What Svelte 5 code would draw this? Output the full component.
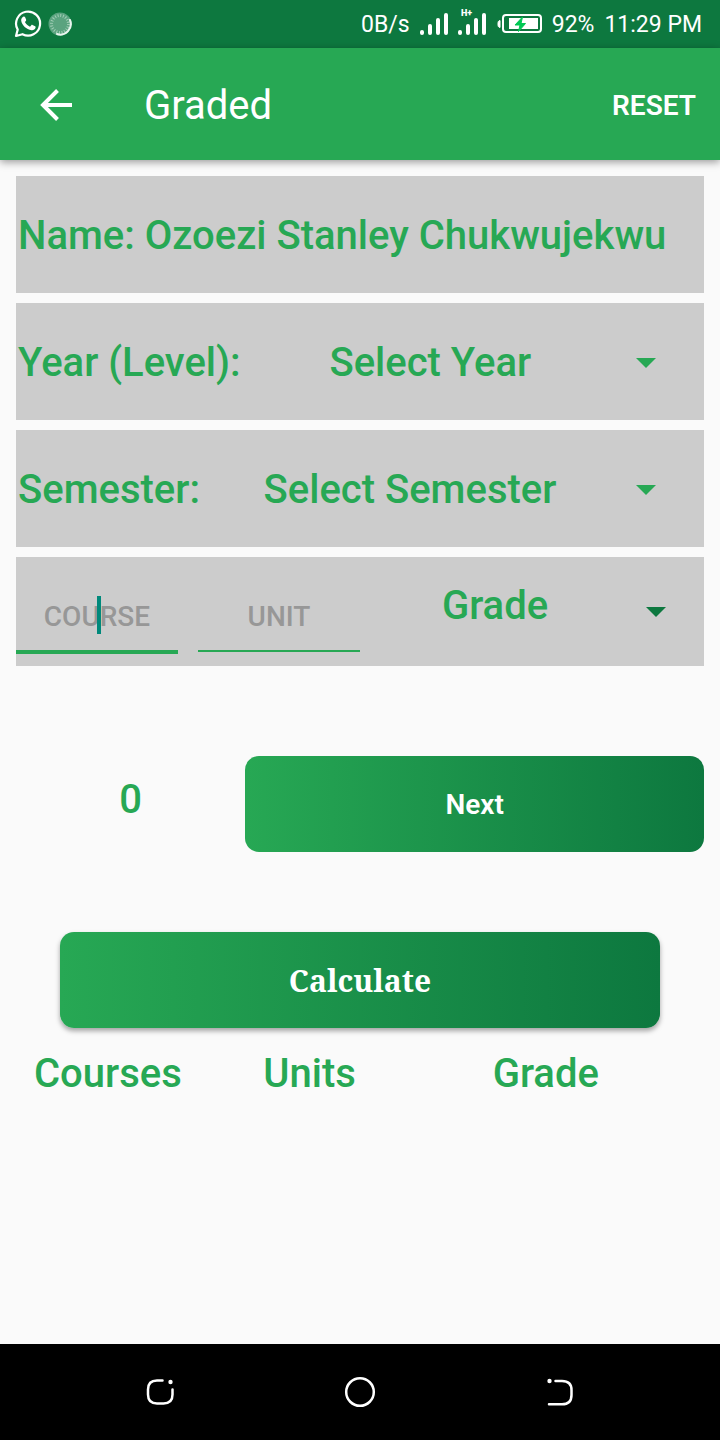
<script>
  let year = $state('');
  let semester = $state('');
  let course = $state('');
  let unit = $state('');
  let grade = $state('');
  let entries = $state([]);

  function addEntry() {
    if (!course || !unit || !grade) return;
    entries.push({ course, unit, grade });
    course = unit = grade = '';
  }

  function reset() {
    year = semester = course = unit = grade = '';
    entries = [];
  }
</script>

{#snippet arrow(dark)}
  <svg class="arrow" class:dark width="20" height="10" viewBox="0 0 20 10" aria-hidden="true"><path d="M0 0h20L10 10z" /></svg>
{/snippet}

{#snippet signal(label)}
  <svg width="28" height="30" viewBox="0 0 28 30" fill="#fff" aria-hidden="true">
    <rect x="0" y="21" width="4" height="5" rx="2" />
    <rect x="8" y="15" width="4" height="11" rx="2" />
    <rect x="16" y="9" width="4" height="17" rx="2" />
    <rect x="24" y="4" width="4" height="22" rx="2" />
    {#if label}<text x="3" y="7" font-size="9" font-weight="900">{label}</text>{/if}
  </svg>
{/snippet}

<div class="screen">
  <div class="status">
    <div class="group">
      <svg width="28" height="30" viewBox="0 0 28 30" aria-hidden="true">
        <path d="M2 27l1.700-6.400A12 12 0 1 1 8.500 25.200z" fill="none" stroke="#fff" stroke-width="2.200" stroke-linejoin="round" />
        <path d="M9.200 7.700c.6-.5 1.500-.4 1.800.3l1.100 2.600c.2.500.1.900-.2 1.300l-1 1.200c1.200 2.200 2.800 3.600 5.100 4.600l1.300-1.500c.3-.4.8-.5 1.200-.3l2.600 1.300c.5.300.7.700.5 1.300-.5 2-2.200 2.900-4.100 2.700C12.300 20.500 8 16.200 7.200 11.700c-.2-1.700.6-3.100 2-4z" fill="#fff" />
      </svg>
      <svg width="24" height="24" viewBox="0 0 24 24" aria-hidden="true">
        <circle cx="12" cy="12" r="11.500" fill="#5aa37f" />
        <circle cx="12" cy="12" r="8.500" fill="none" stroke="#a2cdb6" stroke-width="3" stroke-dasharray="1 1.670" />
        <path d="M22 8a10.500 10.500 0 0 1-13 14" fill="none" stroke="#e8f5ee" stroke-width="2" stroke-linecap="round" />
      </svg>
    </div>
    <div class="group right">
      <span>0B/s</span>
      {@render signal('')}
      {@render signal('H+')}
      <svg width="46" height="20" viewBox="0 0 46 20" aria-hidden="true">
        <path d="M4 6.500v7C2 13 2 12 2 10s0-3 2-3.500z" fill="#fff" stroke="#fff" />
        <rect x="7" y="1" width="38" height="17" rx="3" fill="none" stroke="#fff" stroke-width="2" />
        <rect x="13" y="4" width="29" height="11" fill="#fff" />
        <path d="M26.500 3L19 11h5l-1.500 6.500 7-8H25z" fill="#00c853" stroke="#00c853" stroke-width="1" />
      </svg>
      <span>92%</span>
      <span>11:29 PM</span>
    </div>
  </div>

  <header>
    <button class="back" aria-label="Back">
      <svg width="32" height="32" viewBox="0 0 32 32" fill="none" stroke="#fff" stroke-width="4" aria-hidden="true">
        <path d="M32 16H4M17.500 1.500L3 16l14.500 14.500" />
      </svg>
    </button>
    <h1>Graded</h1>
    <button class="reset" onclick={reset}>RESET</button>
  </header>

  <main>
    <div class="card">Name: Ozoezi Stanley Chukwujekwu</div>

    <div class="card">
      <label for="year">Year (Level):</label>
      <div class="picker">
        <select id="year" bind:value={year}>
          <option value="">Select Year</option>
          {#each [1, 2, 3, 4, 5] as n}<option value={n}>{n}00</option>{/each}
        </select>
        {@render arrow(false)}
      </div>
    </div>

    <div class="card">
      <label for="semester">Semester:</label>
      <div class="picker">
        <select id="semester" bind:value={semester}>
          <option value="">Select Semester</option>
          <option value="1">First</option>
          <option value="2">Second</option>
        </select>
        {@render arrow(false)}
      </div>
    </div>

    <div class="card entry">
      <div class="field active">
        <input aria-label="Course" placeholder="COURSE" bind:value={course} />
        <span class="caret"></span>
      </div>
      <div class="field">
        <input aria-label="Unit" placeholder="UNIT" inputmode="numeric" bind:value={unit} />
      </div>
      <div class="picker grade">
        <select aria-label="Grade" bind:value={grade}>
          <option value="">Grade</option>
          {#each ['A', 'B', 'C', 'D', 'E', 'F'] as g}<option value={g}>{g}</option>{/each}
        </select>
        {@render arrow(true)}
      </div>
    </div>

    <div class="next">
      <output>{entries.length}</output>
      <button class="fill" onclick={addEntry}>Next</button>
    </div>

    <button class="fill calculate">Calculate</button>

    <table>
      <thead>
        <tr><th>Courses</th><th>Units</th><th>Grade</th></tr>
      </thead>
      <tbody>
        {#each entries as e}
          <tr><td>{e.course}</td><td>{e.unit}</td><td>{e.grade}</td></tr>
        {/each}
      </tbody>
    </table>
  </main>

  <nav>
    <button aria-label="Recent apps">
      <svg width="32" height="32" viewBox="0 0 32 32" fill="none" stroke="#fff" stroke-width="2.500" stroke-linecap="round" aria-hidden="true">
        <path d="M18.500 4.500H13c-6 0-9 3-9 9v5c0 6 3 9 9 9h6.500c6 0 9-3 9-9v-5" />
        <circle cx="26.500" cy="6" r="2.200" fill="#fff" stroke="none" />
      </svg>
    </button>
    <button aria-label="Home">
      <svg width="32" height="32" viewBox="0 0 32 32" fill="none" stroke="#fff" stroke-width="2.500" aria-hidden="true"><circle cx="16" cy="16" r="13.800" /></svg>
    </button>
    <button aria-label="Back to previous">
      <svg width="32" height="32" viewBox="0 0 32 32" fill="none" stroke="#fff" stroke-width="2.500" stroke-linecap="round" aria-hidden="true">
        <path d="M11.500 5H18c6 0 9.500 3 9.500 9v5c0 6-3.500 9.300-9.500 9.300H5" />
        <circle cx="5.500" cy="5" r="2.200" fill="#fff" stroke="none" />
      </svg>
    </button>
  </nav>
</div>

<style>
  :global(body) {
    margin: 0;
    background: #fafafa;
  }
  .screen {
    min-height: 100vh;
    display: flex;
    flex-direction: column;
    font-family: Roboto, "Open Sans", sans-serif;
    color: #27a854;
  }
  button,
  input,
  select {
    font: inherit;
    color: inherit;
    border: 0;
    border-radius: 0;
    margin: 0;
    padding: 0;
    background: none;
    min-width: 0;
  }
  svg {
    display: block;
    flex: none;
  }
  .status {
    height: 48px;
    box-sizing: border-box;
    padding: 0 18px 0 14px;
    display: flex;
    align-items: center;
    justify-content: space-between;
    background: #0d783f;
    color: #fff;
    font-size: 23px;
    white-space: nowrap;
  }
  .group {
    display: flex;
    align-items: center;
    gap: 6px;
  }
  .right {
    gap: 10px;
  }
  header {
    height: 112px;
    box-sizing: border-box;
    padding: 2px 24px 0 40px;
    display: flex;
    align-items: center;
    background: #27a854;
    color: #fff;
    box-shadow: 0 2px 8px rgba(0, 0, 0, 0.4);
  }
  .back {
    margin-right: 72px;
  }
  h1 {
    flex: 1;
    margin: 0;
    font-size: 40px;
    font-weight: 400;
  }
  .reset {
    font-size: 28px;
    font-weight: 600;
  }
  main {
    flex: 1;
    padding: 16px;
    display: flex;
    flex-direction: column;
    gap: 10px;
    font-size: 40px;
    font-weight: 500;
  }
  .card {
    min-height: 117px;
    box-sizing: border-box;
    padding: 2px 0 0 2px;
    display: flex;
    align-items: center;
    background: #ccc;
  }
  .picker {
    flex: 1;
    align-self: stretch;
    display: grid;
    grid-template-columns: minmax(0, 1fr);
    align-items: center;
  }
  .picker > select {
    grid-area: 1 / 1;
    width: 100%;
    height: 100%;
    padding-right: 84px;
    appearance: none;
    text-align-last: center;
  }
  .arrow {
    grid-area: 1 / 1;
    justify-self: end;
    margin-right: 48px;
    pointer-events: none;
    fill: #27a854;
  }
  .arrow.dark {
    margin-right: 38px;
    fill: #0d783f;
  }
  .card.entry {
    min-height: 109px;
    padding: 0;
    display: grid;
    grid-template-columns: 1fr 1fr 2fr;
    gap: 20px;
  }
  .grade > select {
    padding-right: 94px;
    padding-bottom: 12px;
  }
  .field {
    position: relative;
    align-self: start;
    height: 93px;
    border-bottom: 2px solid #27a854;
  }
  .field.active {
    border-bottom-width: 4px;
  }
  .field input {
    width: 100%;
    height: 100%;
    box-sizing: border-box;
    padding-top: 26px;
    text-align: center;
    font-size: 28px;
    font-weight: 500;
    outline: 0;
  }
  .field input::placeholder {
    color: #979797;
    opacity: 1;
  }
  .caret {
    position: absolute;
    left: 50%;
    top: 39px;
    width: 4px;
    height: 38px;
    background: #00897b;
  }
  .next {
    margin-top: 80px;
    display: grid;
    grid-template-columns: 1fr 2fr;
    align-items: center;
  }
  output {
    text-align: center;
    padding-bottom: 10px;
  }
  .fill {
    height: 96px;
    border-radius: 14px;
    background: linear-gradient(90deg, #27a854, #0d783f);
    color: #fff;
    font-size: 28px;
    font-weight: 600;
  }
  .calculate {
    margin: 70px 44px 0;
    box-shadow: 0 3px 5px rgba(0, 0, 0, 0.35);
    font-family: "Noto Serif", "Liberation Serif", serif;
    font-size: 30px;
    font-weight: 700;
  }
  table {
    margin-top: 12px;
    width: 100%;
    table-layout: fixed;
    border-collapse: collapse;
  }
  th,
  td {
    padding: 0 0 0 18px;
    text-align: left;
    font-weight: 500;
  }
  nav {
    height: 96px;
    padding: 0 60px;
    display: grid;
    grid-template-columns: repeat(3, 1fr);
    align-items: center;
    justify-items: center;
    background: #000;
  }
</style>
